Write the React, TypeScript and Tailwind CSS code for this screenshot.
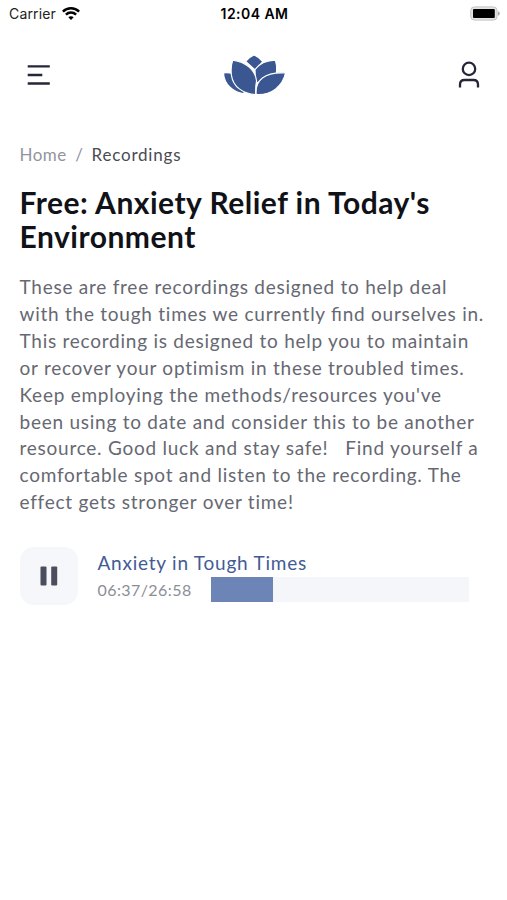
const description = [
  "These are free recordings designed to help deal",
  "with the tough times we currently find ourselves in.",
  "This recording is designed to help you to maintain",
  "or recover your optimism in these troubled times.",
  "Keep employing the methods/resources you've",
  "been using to date and consider this to be another",
  "resource. Good luck and stay safe!\u00a0\u00a0 Find yourself a",
  "comfortable spot and listen to the recording. The",
  "effect gets stronger over time!",
];

function StatusBar() {
  return (
    <div className="grid h-7 grid-cols-3 items-center pl-[9px] pr-[7px] font-['Inter',sans-serif] text-black">
      <div className="flex items-center gap-1.5">
        <span className="text-[14px] leading-7 tracking-[0.15px] text-[#222]">Carrier</span>
        <svg width="18" height="14" viewBox="0 0 18 14" fill="none" stroke="black" strokeWidth="2.5">
          <path d="M0.9 4.6C5.4 0.2 12.6 0.2 17.1 4.6" />
          <path d="M3.9 7.7C6.7 4.9 11.3 4.9 14.1 7.7" />
          <path d="M6.3 10.3C7.8 8.8 10.2 8.8 11.7 10.3L9 13Z" fill="black" stroke="none" />
        </svg>
      </div>
      <span className="-ml-1 text-center text-[14px] font-semibold leading-7 tracking-[0.45px] -mr-1">12:04 AM</span>
      <svg className="justify-self-end" width="30" height="16" viewBox="0 0 30 16">
        <rect x="0.7" y="0.9" width="26.4" height="13.2" rx="3.8" fill="#e4e4e4" stroke="#c4c4c4" />
        <rect x="3" y="3.1" width="21.8" height="8.8" rx="1" fill="black" />
        <path d="M28 5.3C30.4 6.2 30.4 8.8 28 9.7Z" fill="#aaa" />
      </svg>
    </div>
  );
}

function Header() {
  return (
    <header className="flex h-[94px] items-center justify-between pl-[27px] pr-[27px]">
      <svg width="23" height="22" viewBox="0 0 23 22" stroke="#26263a" strokeWidth="2.3">
        <path d="M0.7 2.4H22.8M0.7 11H15.3M0.7 19.5H22.8" />
      </svg>
      {/* Lotus logo, petals stacked from back to front */}
      <svg width="61" height="40" viewBox="0.5 0 59 39.4" preserveAspectRatio="none" fill="#3a5791" stroke="white" strokeWidth="1.1" strokeLinejoin="round">
        <path d="M29.5 0Q34.5 2.3 38 6.5L30.8 15L21.5 6.2Q25 2 29.5 0Z" />
        <path d="M0 17.7Q4 17 8 18L21 38.5C9 37 0.8 29 0 17.7Z" />
        <path d="M50.2 5.1Q52.2 11 51.3 18L31 28L30.5 14.3C35 8.3 41.5 5.2 50.2 5.1Z" />
        <path d="M31.6 38.9C30.3 25 39.5 16.5 60 17.7C57.5 30.5 46 40.2 31.6 38.9Z" />
        <path d="M9 5C21 6.8 30.8 14.2 32 25.5Q30.8 31 31.2 38.9C18.5 38.2 9.4 31.3 7.7 20C7 14.5 7.5 9.3 9 5Z" />
      </svg>
      <svg width="22" height="28" viewBox="0 0 22 28" fill="none" stroke="#26263a" strokeWidth="2.3">
        <circle cx="11" cy="7.9" r="6.2" />
        <path d="M2 26.5V23.5Q2 19 6.5 19H15.5Q20 19 20 23.5V26.5" />
      </svg>
    </header>
  );
}

function Player() {
  return (
    <div className="mt-[31px] flex items-center gap-5">
      <button className="flex h-[58px] w-[58px] items-center justify-center rounded-[14px] bg-[#f5f7fa]" aria-label="Pause">
        <svg width="18" height="20" viewBox="0 0 18 20" fill="#4b4e5d">
          <rect x="0.5" y="0.5" width="6" height="19" rx="1" />
          <rect x="11.2" y="0.5" width="6" height="19" rx="1" />
        </svg>
      </button>
      <div className="flex flex-col pb-0.5">
        <div className="text-[19px] leading-[28px] tracking-[0.77px] text-[#435b94]">Anxiety in Tough Times</div>
        <div className="flex items-center">
          <span className="w-[113.5px] text-[16px] leading-[25px] tracking-[0.42px] text-[#8c8e97]">06:37/26:58</span>
          <div className="h-[25px] w-[257.5px] bg-[#f5f6fa]">
            <div className="h-full w-[62px] bg-[#6c84b6]" />
          </div>
        </div>
      </div>
    </div>
  );
}

export default function App() {
  return (
    <div className="min-h-[900px] w-full overflow-hidden bg-white font-['Lato',sans-serif]">
      <StatusBar />
      <Header />
      <main className="pl-[19.5px] pt-5">
        {/* Breadcrumb */}
        <nav className="flex text-[17px] leading-[26px]">
          <span className="tracking-[0.5px] text-[#92949e]">Home</span>
          <span className="mx-[8.5px] text-[#92949e]">/</span>
          <span className="tracking-[0.8px] text-[#4a4b52]">Recordings</span>
        </nav>
        <h1 className="mt-[17px] text-[30px] font-bold leading-[34px] tracking-[0.5px] text-[#101218]">
          Free: Anxiety Relief in Today's
          <br />
          Environment
        </h1>
        <p className="mt-[21px] whitespace-nowrap text-[19px] leading-[26.9px] tracking-[0.75px] text-[#666872]">
          {description.map((line) => (
            <span key={line} className="block">
              {line.split(/(find)/).map((part, i) =>
                part === "find" ? (
                  <span key={i} className="[font-feature-settings:'liga']">{part}</span>
                ) : (
                  part
                )
              )}
            </span>
          ))}
        </p>
        <Player />
      </main>
    </div>
  );
}
